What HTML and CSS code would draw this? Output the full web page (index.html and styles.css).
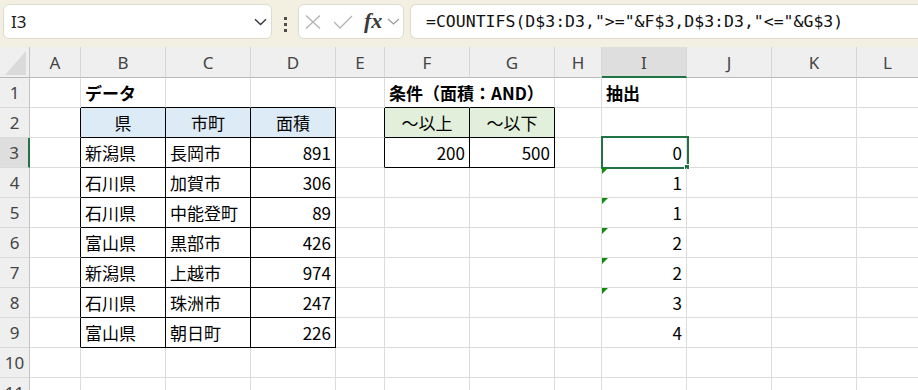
FILE: index.html
```html
<!DOCTYPE html>
<html lang="ja">
<head>
<meta charset="utf-8">
<title>Excel</title>
<link rel="stylesheet" href="styles.css">
</head>
<body>
<div class="fbar">
  <div class="namebox">
    <span class="name">I3</span>
    <svg class="chev" width="13" height="8" viewBox="0 0 13 8"><path d="M1 1.2 L6.5 6.5 L12 1.2" fill="none" stroke="#333" stroke-width="1.3"/></svg>
  </div>
  <div class="grip"><i></i><i></i><i></i></div>
  <div class="fnbox">
    <svg class="ic-x" width="16" height="14" viewBox="0 0 16 14"><path d="M1 0.5 L15 13.5 M15 0.5 L1 13.5" stroke="#b3b3b3" stroke-width="1.3" fill="none"/></svg>
    <svg class="ic-ok" width="20" height="14" viewBox="0 0 20 14"><path d="M1 7 L7 13 L19 1" stroke="#b3b3b3" stroke-width="1.3" fill="none"/></svg>
    <span class="fx">fx</span>
    <svg class="chev2" width="13" height="7" viewBox="0 0 13 7"><path d="M1 1 L6.5 6 L12 1" fill="none" stroke="#9a9a9a" stroke-width="1.2"/></svg>
  </div>
  <div class="formula">=COUNTIFS(D$3:D3,"&gt;="&amp;F$3,D$3:D3,"&lt;="&amp;G$3)</div>
</div>

<div class="sheet">
  <!-- header row -->
  <div class="corner"><div class="tri"></div></div>
  <div class="ch">A</div><div class="ch">B</div><div class="ch">C</div><div class="ch">D</div><div class="ch">E</div><div class="ch">F</div><div class="ch">G</div><div class="ch">H</div><div class="ch sel">I</div><div class="ch">J</div><div class="ch">K</div><div class="ch">L</div>

  <!-- row 1 -->
  <div class="rh">1</div>
  <div class="c"></div><div class="c bb b">データ</div><div class="c bb"></div><div class="c bb"></div><div class="c"></div><div class="c bb b nr">条件（面積：AND）</div><div class="c bb"></div><div class="c"></div><div class="c b">抽出</div><div class="c"></div><div class="c"></div><div class="c"></div>

  <!-- row 2 -->
  <div class="rh">2</div>
  <div class="c br"></div><div class="c bk hb ctr">県</div><div class="c bk hb ctr">市町</div><div class="c bk hb ctr">面積</div><div class="c br"></div><div class="c bk hg ctr">～以上</div><div class="c bk hg ctr">～以下</div><div class="c"></div><div class="c"></div><div class="c"></div><div class="c"></div><div class="c"></div>

  <!-- row 3 -->
  <div class="rh sel">3</div>
  <div class="c br"></div><div class="c bk">新潟県</div><div class="c bk">長岡市</div><div class="c bk num">891</div><div class="c br"></div><div class="c bk num">200</div><div class="c bk num">500</div><div class="c"></div><div class="c num cur">0<span class="selbox"></span><span class="handle"></span></div><div class="c"></div><div class="c"></div><div class="c"></div>

  <!-- row 4 -->
  <div class="rh">4</div>
  <div class="c br"></div><div class="c bk">石川県</div><div class="c bk">加賀市</div><div class="c bk num">306</div><div class="c"></div><div class="c"></div><div class="c"></div><div class="c"></div><div class="c num err">1</div><div class="c"></div><div class="c"></div><div class="c"></div>

  <!-- row 5 -->
  <div class="rh">5</div>
  <div class="c br"></div><div class="c bk">石川県</div><div class="c bk">中能登町</div><div class="c bk num">89</div><div class="c"></div><div class="c"></div><div class="c"></div><div class="c"></div><div class="c num err">1</div><div class="c"></div><div class="c"></div><div class="c"></div>

  <!-- row 6 -->
  <div class="rh">6</div>
  <div class="c br"></div><div class="c bk">富山県</div><div class="c bk">黒部市</div><div class="c bk num">426</div><div class="c"></div><div class="c"></div><div class="c"></div><div class="c"></div><div class="c num err">2</div><div class="c"></div><div class="c"></div><div class="c"></div>

  <!-- row 7 -->
  <div class="rh">7</div>
  <div class="c br"></div><div class="c bk">新潟県</div><div class="c bk">上越市</div><div class="c bk num">974</div><div class="c"></div><div class="c"></div><div class="c"></div><div class="c"></div><div class="c num err">2</div><div class="c"></div><div class="c"></div><div class="c"></div>

  <!-- row 8 -->
  <div class="rh">8</div>
  <div class="c br"></div><div class="c bk">石川県</div><div class="c bk">珠洲市</div><div class="c bk num">247</div><div class="c"></div><div class="c"></div><div class="c"></div><div class="c"></div><div class="c num err">3</div><div class="c"></div><div class="c"></div><div class="c"></div>

  <!-- row 9 -->
  <div class="rh">9</div>
  <div class="c br"></div><div class="c bk">富山県</div><div class="c bk">朝日町</div><div class="c bk num">226</div><div class="c"></div><div class="c"></div><div class="c"></div><div class="c"></div><div class="c num">4</div><div class="c"></div><div class="c"></div><div class="c"></div>

  <!-- row 10 -->
  <div class="rh">10</div>
  <div class="c"></div><div class="c"></div><div class="c"></div><div class="c"></div><div class="c"></div><div class="c"></div><div class="c"></div><div class="c"></div><div class="c"></div><div class="c"></div><div class="c"></div><div class="c"></div>

  <!-- row 11 -->
  <div class="rh">11</div>
  <div class="c"></div><div class="c"></div><div class="c"></div><div class="c"></div><div class="c"></div><div class="c"></div><div class="c"></div><div class="c"></div><div class="c"></div><div class="c"></div><div class="c"></div><div class="c"></div>
</div>
</body>
</html>
```

FILE: styles.css
```css
* { box-sizing: border-box; }

html, body {
  margin: 0;
  padding: 0;
  background: #ffffff;
  overflow: hidden;
}

body {
  width: 918px;
  height: 390px;
  font-family: "Noto Sans CJK JP", "Noto Sans", sans-serif;
  color: #000;
}

/* ---------- formula bar ---------- */
.fbar {
  height: 47px;
  background: #f3f0e2;
  display: flex;
  align-items: flex-start;
  padding: 4px 0 0 3px;
}

.namebox {
  width: 269px;
  height: 35px;
  background: #fff;
  border: 1px solid #dedbd0;
  border-radius: 6px;
  display: flex;
  align-items: center;
  justify-content: space-between;
  padding: 0 4px 0 7px;
}

.name {
  font-family: "Noto Sans", sans-serif;
  font-size: 17px;
  color: #222;
  line-height: 1;
}

.chev { display: block; }

.grip {
  width: 26px;
  height: 35px;
  display: flex;
  flex-direction: column;
  align-items: center;
  gap: 3px;
  padding-top: 13px;
}

.grip i {
  display: block;
  width: 3px;
  height: 3px;
  background: #4d4d4d;
}

.fnbox {
  width: 106px;
  height: 35px;
  background: #fff;
  border: 1px solid #dedbd0;
  border-radius: 6px;
  display: flex;
  align-items: center;
  padding-left: 6px;
}

.ic-x { display: block; }
.ic-ok { display: block; margin-left: 12px; }

.fx {
  margin-left: 11px;
  font-family: "Liberation Serif", serif;
  font-style: italic;
  font-weight: 700;
  font-size: 22px;
  line-height: 1;
  color: #3a3a3a;
  position: relative;
  top: -1px;
}

.chev2 { display: block; margin-left: 5px; }

.formula {
  flex: 1;
  margin-left: 6px;
  height: 35px;
  background: #fff;
  border: 1px solid #dedbd0;
  border-right: none;
  border-radius: 6px 0 0 6px;
  padding-left: 15px;
  font-family: "DejaVu Sans Mono", "Liberation Mono", monospace;
  font-size: 16.5px;
  line-height: 33px;
  color: #111;
  white-space: nowrap;
}

/* ---------- sheet grid ---------- */
.sheet {
  display: grid;
  grid-template-columns: 30px 51px 85px 85px 85px 49px 85px 85px 47px 85px 85px 85px 62px;
  grid-template-rows: 31px repeat(11, 30px);
}

.corner {
  background: #efefef;
  border-right: 1px solid #c4c4c4;
  border-bottom: 1px solid #b8b8b8;
  display: flex;
  align-items: flex-end;
  justify-content: flex-end;
  padding: 0 3px 2px 0;
}

.tri {
  width: 21px;
  height: 24px;
  background: #dadada;
  clip-path: polygon(100% 0, 100% 100%, 0 100%);
}

.ch {
  background: #efefef;
  border-right: 1px solid #d6d6d6;
  border-bottom: 1px solid #b8b8b8;
  display: flex;
  align-items: center;
  justify-content: center;
  font-family: "Noto Sans", sans-serif;
  font-size: 17px;
  color: #444;
  line-height: 1;
}

.ch.sel {
  background: #dedede;
  border-bottom: 2px solid #217346;
  padding-top: 1px;
}

.rh {
  background: #efefef;
  border-right: 1px solid #c4c4c4;
  border-bottom: 1px solid #d9d9d9;
  display: flex;
  align-items: center;
  justify-content: center;
  font-family: "Noto Sans", sans-serif;
  font-size: 17px;
  color: #444;
  line-height: 1;
}

.rh.sel {
  background: #dedede;
  border-right: 2px solid #217346;
}

.c {
  border-right: 1px solid #dcdcdc;
  border-bottom: 1px solid #dcdcdc;
  display: flex;
  align-items: center;
  padding: 0 4px;
  font-size: 17px;
  line-height: 1;
  white-space: nowrap;
  color: #000;
}

.c.b { font-weight: 700; }
.c.nr { border-right-color: transparent; }
.c.bb { border-bottom-color: #000; }
.c.br { border-right-color: #000; }
.c.bk { border-right-color: #000; border-bottom-color: #000; }
.c.hb { background: #ddebf7; }
.c.hg { background: #e2efda; }
.c.ctr { justify-content: center; }
.c.num { justify-content: flex-end; }

.c.cur { position: relative; }

.selbox {
  position: absolute;
  left: -1px;
  top: -2px;
  width: 88px;
  height: 33px;
  border: 2px solid #217346;
  pointer-events: none;
}

.handle {
  position: absolute;
  left: 82px;
  top: 26px;
  width: 6px;
  height: 6px;
  background: #217346;
  border: 1px solid #fff;
}

.c.err { position: relative; }

.c.err::before {
  content: "";
  position: absolute;
  left: 0;
  top: 0;
  width: 6px;
  height: 6px;
  background: #128a12;
  clip-path: polygon(0 0, 100% 0, 0 100%);
}
```
